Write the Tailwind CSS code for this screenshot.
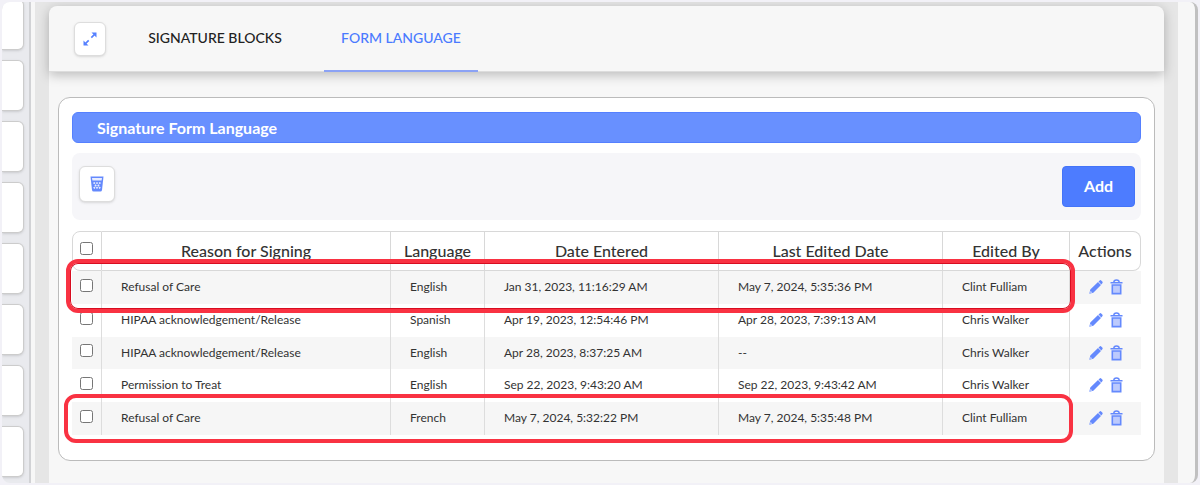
<!DOCTYPE html>
<html lang="en">

<head>
    <meta charset="UTF-8" />
    <meta name="viewport" content="width=device-width, initial-scale=1.0" />
    <title>Signature Form Language</title>
    <script src="https://cdn.jsdelivr.net/npm/@tailwindcss/browser@4"></script>
</head>

<body class="h-screen overflow-hidden bg-[#f2f1f7] p-0.5 font-['Lato',sans-serif] text-[#333]">

    <!-- Icons -->
    <svg class="hidden">
        <symbol id="pencil" viewBox="0 0 14 14">
            <path fill="#6489fd" d="M9.500 1.600 11 .3q.6-.4 1.200.1l1.300 1.400q.4.500 0 1.100L12.300 4.400zM9 2l3 3-7.700 7.700L.3 13.700l1-4.200z" />
            <path fill="#dbe3ff" d="m1.500 10.800 1.700 1.600-1.900.6z" />
        </symbol>
        <symbol id="trash" viewBox="0 0 13 16">
            <path fill="none" stroke="#6489fd" stroke-width="1.400" d="M.5 3.700h12M3.800 3.200q0-2.200 2.700-2.200t2.700 2.200" />
            <path fill="#bccafd" stroke="#6489fd" stroke-width="1.600" d="M2.300 6h8.400v8.600H2.300z" />
        </symbol>
    </svg>

    <div class="flex h-full overflow-hidden rounded-lg border-r-3 border-[#c0c0c0] bg-[#f7f7f7]">

        <!-- Sidebar -->
        <aside class="flex w-[29px] shrink-0 flex-col gap-2.5 border-r-2 border-[#d1d2d5] bg-[#e9eaee]">
            <div class="-mt-[3px] h-[51px] w-[22px] shrink-0 rounded-r-md border border-l-0 border-[#ccc] bg-white shadow-sm"></div>
            <div class="h-[51px] w-[22px] shrink-0 rounded-r-md border border-l-0 border-[#ccc] bg-white shadow-sm"></div>
            <div class="h-[51px] w-[22px] shrink-0 rounded-r-md border border-l-0 border-[#ccc] bg-white shadow-sm"></div>
            <div class="h-[51px] w-[22px] shrink-0 rounded-r-md border border-l-0 border-[#ccc] bg-white shadow-sm"></div>
            <div class="h-[51px] w-[22px] shrink-0 rounded-r-md border border-l-0 border-[#ccc] bg-white shadow-sm"></div>
            <div class="h-[51px] w-[22px] shrink-0 rounded-r-md border border-l-0 border-[#ccc] bg-white shadow-sm"></div>
            <div class="h-[51px] w-[22px] shrink-0 rounded-r-md border border-l-0 border-[#ccc] bg-white shadow-sm"></div>
            <div class="h-[51px] w-[22px] shrink-0 rounded-r-md border border-l-0 border-[#ccc] bg-white shadow-sm"></div>
        </aside>

        <!-- Content -->
        <main class="mr-[17px] ml-1 flex grow flex-col overflow-hidden bg-[#e6e6e6] pt-1 pr-3.5 pl-3.5">
            <header class="relative flex h-[66px] shrink-0 rounded-t-lg border-b border-[#ddd] bg-[#f7f7f7] pl-[25px] shadow-[0_3px_12px_rgba(0,0,0,0.25)]">
                <button aria-label="Expand" class="mt-4 flex h-[34px] w-8 items-center justify-center rounded-md border border-[#ddd] bg-white shadow-sm">
                    <svg class="size-3.5" viewBox="0 0 14 14" fill="none" stroke="#5580ff" stroke-width="1.700">
                        <path d="M8.300 5.700 12 2M5.700 8.300 2 12" />
                        <path fill="#5580ff" stroke="none" d="M8.500 .5h5v5zM.5 8.500v5h5z" />
                    </svg>
                </button>
                <nav class="ml-6 flex text-[14px] font-medium">
                    <a href="#" class="w-[170px] pt-[21px] text-center text-[#222]">SIGNATURE BLOCKS</a>
                    <a href="#" class="-mb-px ml-6 w-[154px] border-b-2 border-[#8ba2f5] pt-[21px] text-center text-[#4a7aff]">FORM LANGUAGE</a>
                </nav>
            </header>

            <div class="grow bg-[#f7f7f7] px-[9px] pt-[25px]">
                <section class="rounded-xl border border-[#bbb] bg-white px-[13px] pt-3.5 pb-[25px]">
                    <h1 class="rounded-md border border-[#5580ff] bg-[#6890ff] pl-6 text-base leading-[29px] font-bold text-white">Signature Form Language</h1>

                    <div class="mt-2.5 flex h-[67px] items-start justify-between rounded-lg bg-[#f6f6f9] pt-[13px] pr-1.5 pl-[7px]">
                        <button aria-label="Deleted items" class="flex size-9 items-center justify-center rounded-md border border-[#ddd] bg-white shadow-sm">
                            <svg class="h-4 w-3.5" viewBox="0 0 14 16">
                                <path fill="#6489fd" d="M.5.500h13L12 14q-.2 1.500-1.700 1.500H3.700Q2.200 15.500 2 14z" />
                                <path fill="#e8edff" d="M2 2h10l-.4 2.600H2.400zM3 7l1.200-1L5.500 7 4.200 8.300zM5.800 7 7 6l1.200 1L7 8.300zM8.500 7l1.300-1L11 7 9.800 8.300zM4.400 9.500l1.200-1.200 1.200 1.200-1.200 1.200zM7.200 9.500l1.200-1.200 1.200 1.200-1.200 1.200zM3.200 11.800l1-1.200 1.300 1.200L4.400 13zM5.800 11.800 7 10.600l1.200 1.200L7 13zM8.500 11.800l1.300-1.200 1 1.200L9.600 13z" />
                            </svg>
                        </button>
                        <button class="h-[41px] w-[73px] rounded-sm border border-[#4474f8] bg-[#4d7cff] pb-0.5 text-base font-bold text-white">Add</button>
                    </div>

                    <div class="relative mt-[11px]">
                        <table class="w-full table-fixed border-separate border-spacing-0 text-left text-[12px] leading-4">
                            <colgroup>
                                <col class="w-[30px]" />
                                <col />
                                <col class="w-[94px]" />
                                <col class="w-[234px]" />
                                <col class="w-[224px]" />
                                <col class="w-[127px]" />
                                <col class="w-[71px]" />
                            </colgroup>
                            <thead>
                                <tr class="h-10 text-center text-base leading-4 *:border-y *:border-r *:border-[#d8d8d8] *:p-0 *:pb-px *:font-medium">
                                    <th class="rounded-l-lg border-l align-middle"><input type="checkbox" aria-label="Select all" class="mb-1 ml-[7px] block size-[13px]" /></th>
                                    <th>Reason for Signing</th>
                                    <th>Language</th>
                                    <th>Date Entered</th>
                                    <th>Last Edited Date</th>
                                    <th>Edited By</th>
                                    <th class="rounded-r-lg">Actions</th>
                                </tr>
                            </thead>
                            <tbody>
                                <tr class="h-[33px] bg-[#f6f6f6] *:border-r *:border-[#ddd] *:p-0 *:pb-px *:pl-[19px] *:last:border-r-0">
                                    <td class="pl-2!"><input type="checkbox" aria-label="Select row 1" class="mb-1 block size-[13px]" /></td>
                                    <td>Refusal of Care</td>
                                    <td>English</td>
                                    <td>Jan 31, 2023, 11:16:29 AM</td>
                                    <td>May 7, 2024, 5:35:36 PM</td>
                                    <td>Clint Fulliam</td>
                                    <td>
                                        <div class="flex gap-[7px]">
                                            <button aria-label="Edit"><svg class="h-4 w-3.5"><use href="#pencil" /></svg></button>
                                            <button aria-label="Delete"><svg class="h-4 w-[13px]"><use href="#trash" /></svg></button>
                                        </div>
                                    </td>
                                </tr>
                                <tr class="h-[33px] *:border-r *:border-[#ddd] *:p-0 *:pb-px *:pl-[19px] *:last:border-r-0">
                                    <td class="pl-2!"><input type="checkbox" aria-label="Select row 2" class="mb-1 block size-[13px]" /></td>
                                    <td>HIPAA acknowledgement/Release</td>
                                    <td>Spanish</td>
                                    <td>Apr 19, 2023, 12:54:46 PM</td>
                                    <td>Apr 28, 2023, 7:39:13 AM</td>
                                    <td>Chris Walker</td>
                                    <td>
                                        <div class="flex gap-[7px]">
                                            <button aria-label="Edit"><svg class="h-4 w-3.5"><use href="#pencil" /></svg></button>
                                            <button aria-label="Delete"><svg class="h-4 w-[13px]"><use href="#trash" /></svg></button>
                                        </div>
                                    </td>
                                </tr>
                                <tr class="h-8 bg-[#f6f6f6] *:border-r *:border-[#ddd] *:p-0 *:pb-px *:pl-[19px] *:last:border-r-0">
                                    <td class="pl-2!"><input type="checkbox" aria-label="Select row 3" class="mb-1 block size-[13px]" /></td>
                                    <td>HIPAA acknowledgement/Release</td>
                                    <td>English</td>
                                    <td>Apr 28, 2023, 8:37:25 AM</td>
                                    <td>--</td>
                                    <td>Chris Walker</td>
                                    <td>
                                        <div class="flex gap-[7px]">
                                            <button aria-label="Edit"><svg class="h-4 w-3.5"><use href="#pencil" /></svg></button>
                                            <button aria-label="Delete"><svg class="h-4 w-[13px]"><use href="#trash" /></svg></button>
                                        </div>
                                    </td>
                                </tr>
                                <tr class="h-[33px] *:border-r *:border-[#ddd] *:p-0 *:pb-px *:pl-[19px] *:last:border-r-0">
                                    <td class="pl-2!"><input type="checkbox" aria-label="Select row 4" class="mb-1 block size-[13px]" /></td>
                                    <td>Permission to Treat</td>
                                    <td>English</td>
                                    <td>Sep 22, 2023, 9:43:20 AM</td>
                                    <td>Sep 22, 2023, 9:43:42 AM</td>
                                    <td>Chris Walker</td>
                                    <td>
                                        <div class="flex gap-[7px]">
                                            <button aria-label="Edit"><svg class="h-4 w-3.5"><use href="#pencil" /></svg></button>
                                            <button aria-label="Delete"><svg class="h-4 w-[13px]"><use href="#trash" /></svg></button>
                                        </div>
                                    </td>
                                </tr>
                                <tr class="h-[33px] bg-[#f6f6f6] *:border-r *:border-[#ddd] *:p-0 *:pb-px *:pl-[19px] *:last:border-r-0">
                                    <td class="pl-2!"><input type="checkbox" aria-label="Select row 5" class="mb-1 block size-[13px]" /></td>
                                    <td>Refusal of Care</td>
                                    <td>French</td>
                                    <td>May 7, 2024, 5:32:22 PM</td>
                                    <td>May 7, 2024, 5:35:48 PM</td>
                                    <td>Clint Fulliam</td>
                                    <td>
                                        <div class="flex gap-[7px]">
                                            <button aria-label="Edit"><svg class="h-4 w-3.5"><use href="#pencil" /></svg></button>
                                            <button aria-label="Delete"><svg class="h-4 w-[13px]"><use href="#trash" /></svg></button>
                                        </div>
                                    </td>
                                </tr>
                            </tbody>
                        </table>

                        <!-- Highlights around the refusal rows -->
                        <div class="pointer-events-none absolute top-7 right-[66px] -left-1.5 h-[54px] rounded-xl border-4 border-[#f93242] inset-ring inset-ring-[#d80d20]"></div>
                        <div class="pointer-events-none absolute top-[163px] right-[68px] -left-2 h-[49px] rounded-xl border-4 border-[#f93242]"></div>
                    </div>
                </section>
            </div>
        </main>
    </div>
</body>

</html>
